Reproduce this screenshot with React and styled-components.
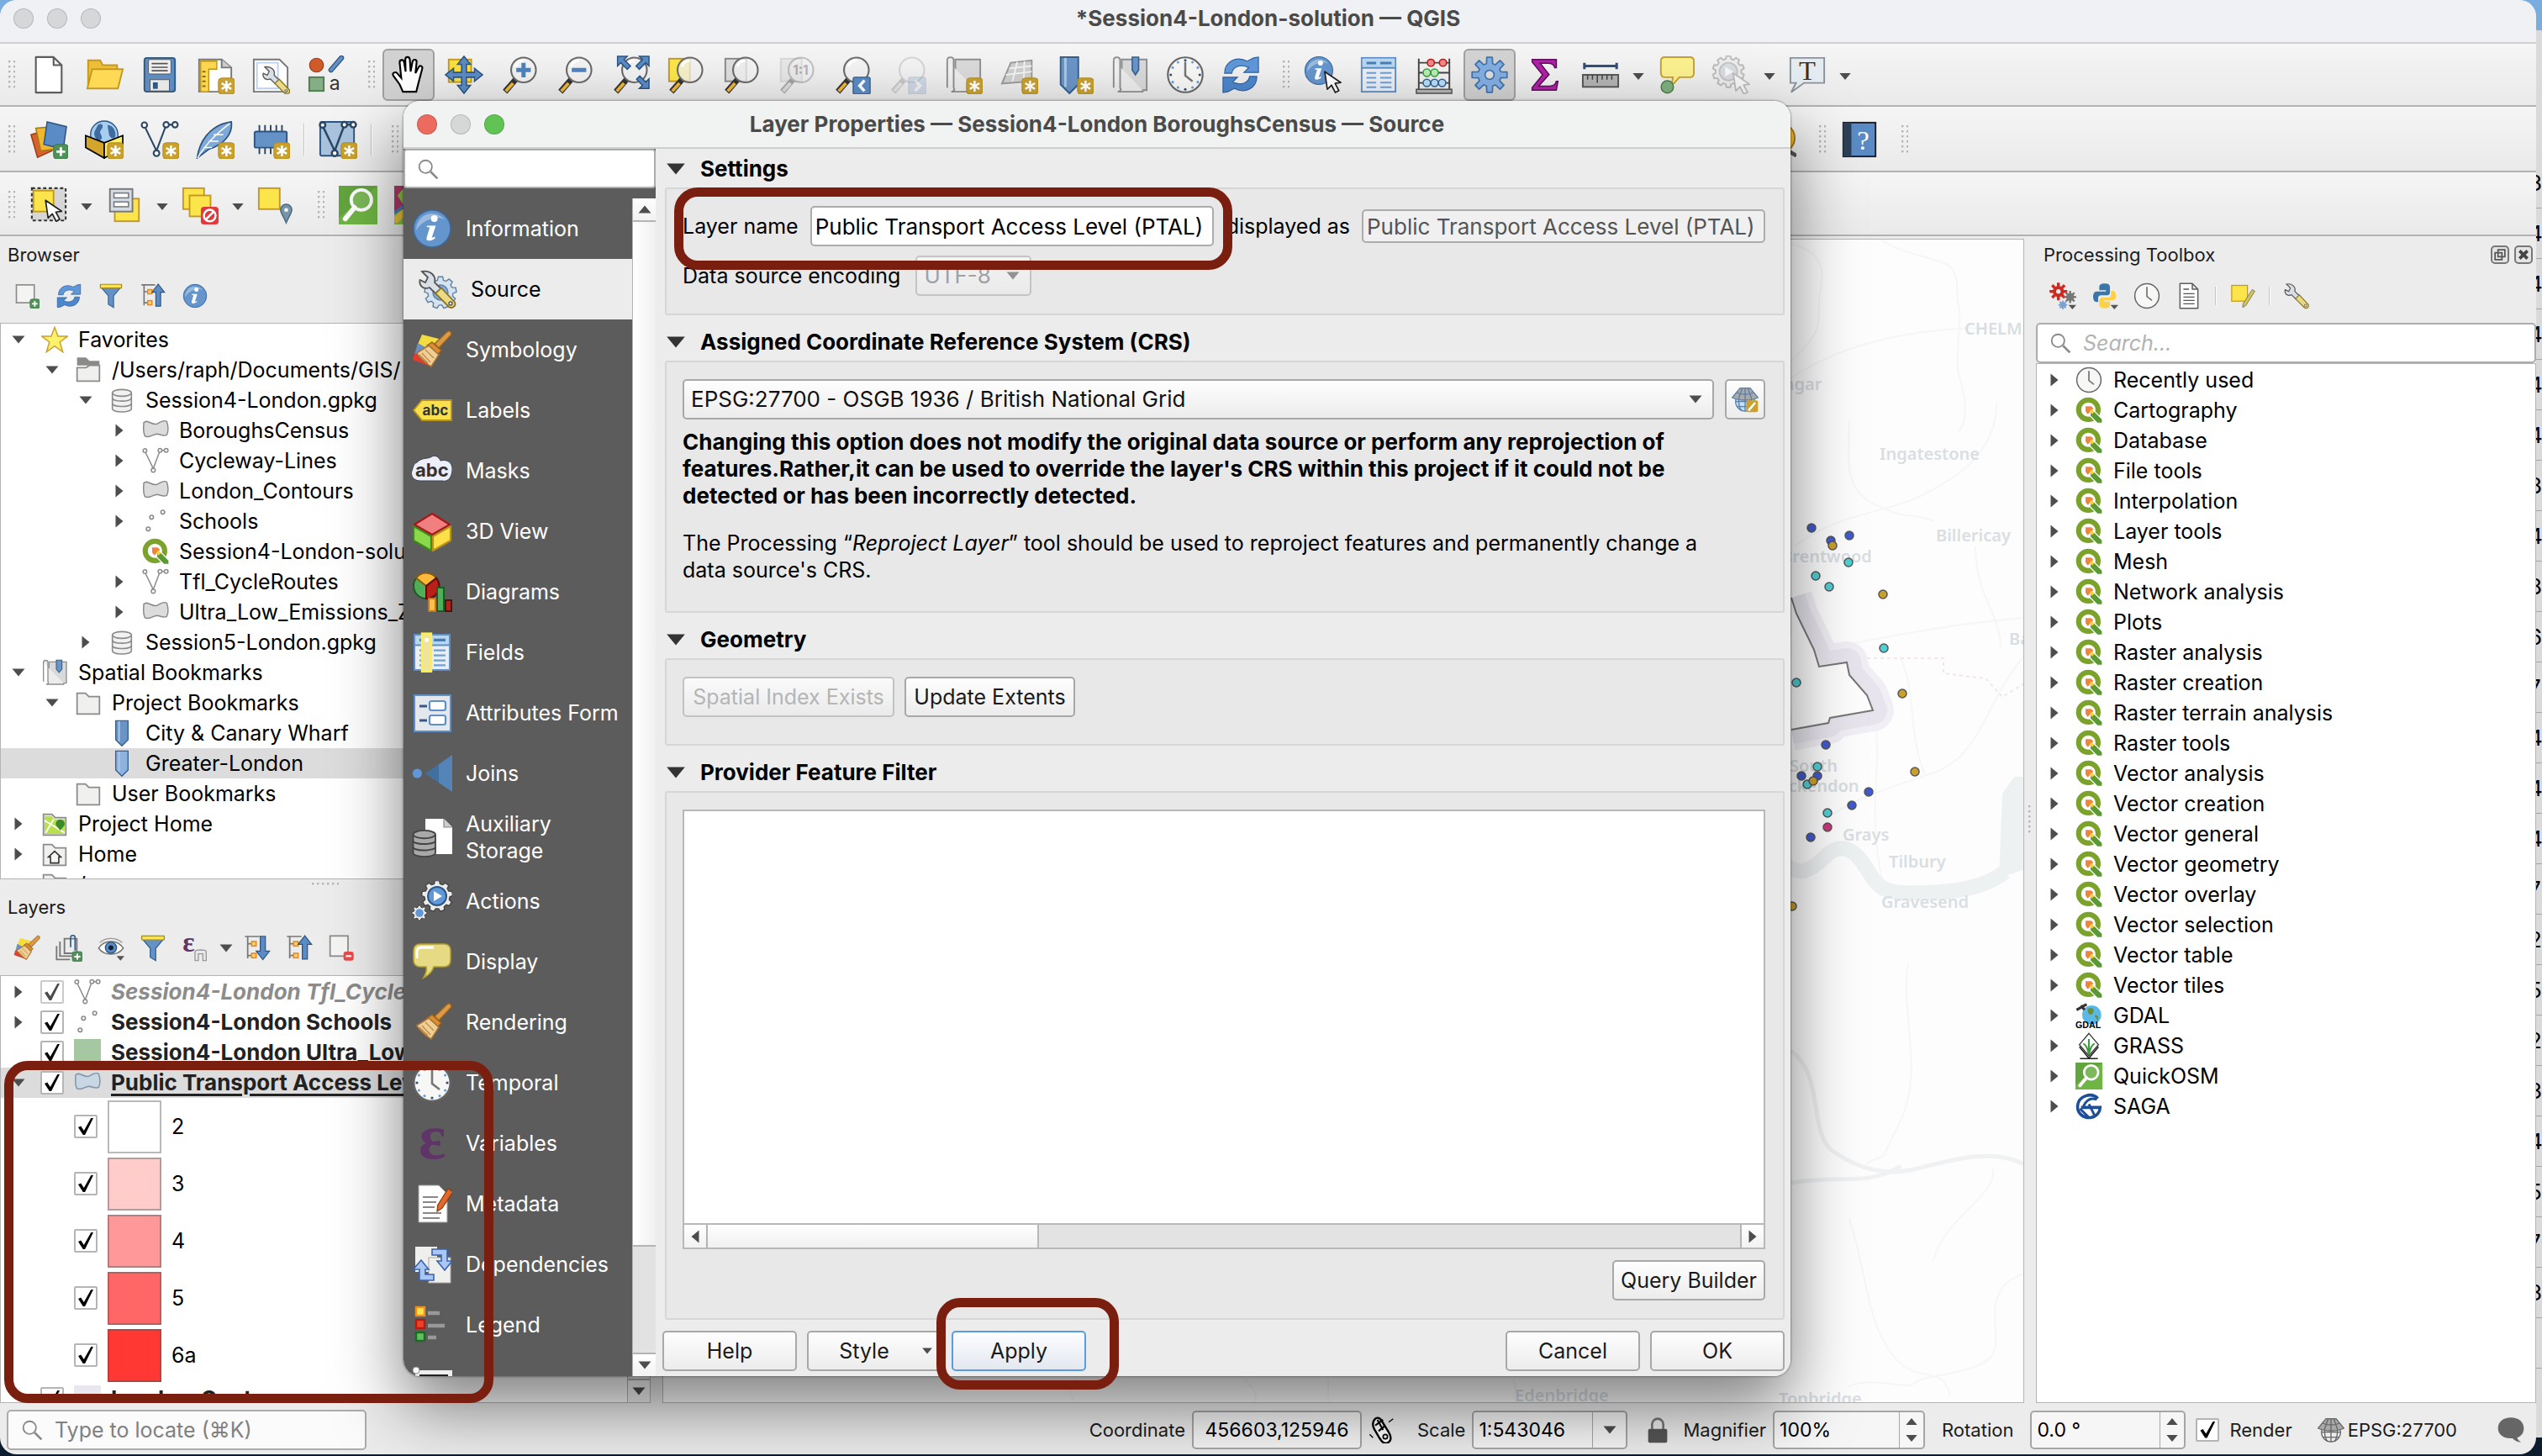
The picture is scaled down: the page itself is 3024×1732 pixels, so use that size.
import React from "react";
import styled, { createGlobalStyle } from "styled-components";

const GlobalStyle = createGlobalStyle`
  *, *::before, *::after { box-sizing: border-box; }
  html, body { margin: 0; height: 100%; overflow: hidden; }
  body, button, input, select, textarea {
    font-family: Inter, "Liberation Sans", sans-serif;
    font-size: 25px;
    line-height: 32px;
    color: #000;
  }
  button, input, select { margin: 0; }
  ul { list-style: none; margin: 0; padding: 0; }
`;

/* ---------- drawing helpers ---------- */

function gear(cx, cy, ro, ri, n) {
  const step = (Math.PI * 2) / n;
  const pts = [];
  for (let i = 0; i < n; i++) {
    const a = i * step - Math.PI / 2;
    [[ri, -0.34], [ro, -0.2], [ro, 0.2], [ri, 0.34]].forEach(([r, o]) => {
      pts.push(`${(cx + r * Math.cos(a + o * step)).toFixed(2)},${(cy + r * Math.sin(a + o * step)).toFixed(2)}`);
    });
  }
  return pts.join(" ");
}

const Star = ({ x = 14, y = 14 }) => (
  <g transform={`translate(${x} ${y})`}>
    <rect width="10" height="10" rx="2" fill="#c9a12c" stroke="#b08a1c" strokeWidth=".5" />
    <path d="M5 1.6v6.8M2 3.2l6 3.6M8 3.2L2 6.8" stroke="#fff" strokeWidth="1.3" />
  </g>
);
const Plus = ({ x = 15, y = 15 }) => (
  <g transform={`translate(${x} ${y})`}>
    <rect width="9" height="9" rx="1.8" fill="#4f9159" stroke="#3a7444" strokeWidth=".5" />
    <path d="M4.5 1.8v5.4M1.8 4.5h5.4" stroke="#fff" strokeWidth="1.5" />
  </g>
);
const Cursor = ({ x, y, fill = "#fff", stroke = "#222" }) => (
  <path transform={`translate(${x} ${y})`} d="M0 0l1.6 11 2.6-2.6L6.6 13l2.2-1.2-2.4-4.5 3.6-.5z" fill={fill} stroke={stroke} strokeWidth=".9" strokeLinejoin="round" />
);
const Lens = ({ children, faded, cx = 14.5 }) => (
  <g opacity={faded ? 0.35 : 1}>
    <path d="M9.5 15L3 22.5" stroke="#333" strokeWidth="3.6" />
    <path d="M8 17.2L3.500 22.2" stroke={faded ? "#bbb" : "#f0b72e"} strokeWidth="2" />
    <circle cx={cx} cy="9" r="7.7" fill="#f2f2f2" fillOpacity=".75" stroke="#6b6b6b" strokeWidth="1.1" />
    <path d="M9.500 7a5.500 5.500 0 0 1 5-3.800" stroke="#fff" strokeWidth="1.4" fill="none" />
    {children}
  </g>
);
const Info = () => (
  <g>
    <circle cx="12" cy="12" r="11" fill="#6495cd" stroke="#3c6a9f" strokeWidth=".8" />
    <path d="M2.500 13a9.600 9.600 0 0 1 17-6.500c-4-2-12-1-17 6.500z" fill="#fff" opacity=".35" />
    <circle cx="13.3" cy="6" r="2" fill="#fff" />
    <path d="M9 10.200h5.200l-2.400 7.300 1.800-.7.300.8c-1.600 1.500-5.500 2.600-5.200 0l1.900-6.300-1.700-.3z" fill="#fff" />
  </g>
);
const BlueArrows = () => (
  <g stroke="#2f619f" strokeWidth=".6">
    <path d="M2 11C2 4 9 0 16 3.500L20 1.500l3 -.5v9.500h-9l3-3C12 5 7 7 6.500 11z" fill="#5f97d8" />
    <path d="M22 13c0 7-7 11-14 7.500L4 22.500l-3 .5v-9.500h9l-3 3c5 2.500 10 .5 10.500-3.500z" fill="#4c86cb" />
  </g>
);
const VLine = ({ c = "#2b4763", w = 1.1 }) => (
  <g fill="none" stroke={c} strokeWidth={w}>
    <path d="M3 4.500l7 14.500 6-16M17.500 2.800h3" />
    <circle cx="2.5" cy="3" r="1.7" fill="#fff" /><circle cx="10" cy="20.5" r="1.8" fill="#fff" />
    <circle cx="16" cy="2.8" r="1.7" fill="#fff" /><circle cx="21.5" cy="2.8" r="1.7" fill="#fff" />
  </g>
);
const Wrench = () => (
  <g>
    <path d="M3 1.500L6.500 5 5 8 1.800 6.500C1 10 4 12.500 7.500 11l4 4 3.200-3L10.500 8C11.500 4 8 .5 3 1.500z" fill="#d9dfe6" stroke="#555" strokeWidth=".9" />
    <path d="M11 14.500l3.500-3.300 8 8.500c1 2-1 4-3.300 3z" fill="#ead985" stroke="#8a7526" strokeWidth=".9" />
    <circle cx="20" cy="20.5" r="1" fill="#fff" stroke="#555" strokeWidth=".7" />
  </g>
);
const Funnel = () => (
  <g strokeWidth=".9">
    <path d="M2 3h20L14.500 12v11l-5-3V12z" fill="#6592c6" stroke="#33608f" />
    <path d="M2 1h20v3.500H2z" fill="#fbe54a" stroke="#a48a1c" />
  </g>
);
const TreeArrow = ({ up }) => (
  <g>
    <path d="M1 1.500h13M3.500 2v19M3.500 8h4M3.500 18.500h4" stroke="#777" strokeWidth="1.3" fill="none" />
    <rect x="7" y="6" width="4" height="4" fill="#ffd27a" stroke="#e88a1a" strokeWidth="1.2" />
    <rect x="7" y="16.5" width="4" height="4" fill="#ffd27a" stroke="#e88a1a" strokeWidth="1.2" />
    <path transform={up ? "" : "matrix(1 0 0 -1 0 23)"} d="M17 .8l6 7.700h-3.700v13.200h-4.600V8.500H11z" fill="#5b8bc4" stroke="#2d5580" strokeWidth=".9" />
  </g>
);
const Brush = ({ plain }) => (
  <g>
    {!plain && <><path d="M6 3l12 3-8 8-7-4z" fill="#f4dc3f" /><path d="M3.500 8l9 5-3 5-8-3z" fill="#6a8fc8" /><path d="M1.500 14l10 4 0 4L.5 18z" fill="#e63a2d" /></>}
    <path d="M22.800 1.200c1 .8.8 1.700 0 2.600L16 11l-2.500-2.500 7-6.700c.800-.9 1.600-1.200 2.300-.6z" fill="#dc9a45" stroke="#9a5f1a" strokeWidth=".7" />
    <path d="M12 7.500l5.500 5-2.500 2.500-6-5.500z" fill="#d98c32" stroke="#9a5f1a" strokeWidth=".7" />
    <path d="M9 9.500l6 5.500-4.500 7C7 20 4 17 1.800 14z" transform="translate(1 0)" fill="#f0cf96" stroke="#a87331" strokeWidth=".8" />
    <path d="M6 14l5 5.500M8 12l5 5M4.500 15l5 5" stroke="#b98545" strokeWidth=".6" />
  </g>
);
const QLogo = () => (
  <g>
    <circle cx="11.5" cy="11.5" r="8.7" fill="#fff" stroke="#7ba32c" strokeWidth="4.6" />
    <path d="M13 13h4l7 7v3.500h-4.500l-6.500-6.500z" fill="#5a9a33" stroke="#fff" strokeWidth=".9" />
    <path d="M9 8.500h5l2 2-3 3-2 2L9 13z" fill="#f08438" />
    <path d="M12.500 13l2-2 2.500 2.500-2.500 2z" fill="#f4d43c" />
  </g>
);
const Clock = ({ dots }) => (
  <g>
    <circle cx="12" cy="12" r="10.8" fill="#f7f7f5" stroke="#666" strokeWidth="1.1" />
    {dots && Array.from({ length: 12 }, (_, i) => (
      <circle key={i} cx={12 + 9 * Math.sin(i * Math.PI / 6)} cy={12 - 9 * Math.cos(i * Math.PI / 6)} r=".8" fill={i % 3 ? "#6d9fd6" : "#2c4f73"} />
    ))}
    <path d="M12 4v8.500l4.500 3.500" fill="none" stroke="#777" strokeWidth="1.3" />
  </g>
);
const Page = () => <path d="M4 1h11l5 5v17H4z M15 1v5h5" fill="#fff" stroke="#5c5c5c" strokeWidth="1.1" strokeLinejoin="round" />;
const Db = ({ dark }) => (
  <g fill={dark ? "#a8a8a8" : "#f1f1f1"} stroke={dark ? "#444" : "#8a8a88"} strokeWidth="1.2">
    <path d="M3.500 5.500v14c0 4 17 4 17 0v-14" /><path d="M3.500 15c0 3.500 17 3.500 17 0M3.500 10.200c0 3.500 17 3.500 17 0" fill="none" />
    <ellipse cx="12" cy="5.5" rx="8.5" ry="3" />
  </g>
);
const Folder = ({ children }) => <g><path d="M2 3.500h7.500l3 3H22V22H2z" fill="#f0f0ee" stroke="#8a8a88" strokeWidth="1.3" />{children}</g>;
const Poly = ({ f = "#dcdcdc", s = "#8a8a88" }) => <path d="M1.500 5c3-3.500 7 2.500 11.500 1.300C16.500 5 18.500 2 22 4c1.500 4.500 1.500 9 0 12-3 1.500-5.500-.5-8.500-.8-4 0-7.500 4.300-11 1.800C.5 13 1.500 9 1.500 5z" fill={f} stroke={s} strokeWidth="1.1" />;
const Pts = () => <g fill="#fff" stroke="#8a8a88" strokeWidth="1.2"><circle cx="5.5" cy="19" r="1.7" /><circle cx="8.5" cy="8.5" r="1.7" /><circle cx="18.5" cy="4" r="1.7" /></g>;
const Pin = ({ f = "#6a94c6" }) => <g><path d="M6.500 1h11v17L12 23.500 6.500 18z" fill={f} stroke="#33608f" strokeWidth="1" /><path d="M9.500 1.500v18" stroke="#a9c7e8" strokeWidth="1.5" /></g>;
const Book = () => <g><path d="M7 2.500h15.500v19H7z" fill="#d9d9d9" stroke="#8e8e8e" /><path d="M2 3c0-2.500 4-2.500 4 0v17c1 1.200 0 2.500-1.500 2.500H20v-1" fill="#ececec" stroke="#8e8e8e" /><path d="M2 3v17" stroke="#8e8e8e" /></g>;
const Quick = () => (
  <g>
    <rect width="24" height="24" fill="#6fb544" /><path d="M0 0h24L0 20z" fill="#58983a" opacity=".55" />
    <circle cx="14" cy="8.8" r="6.3" fill="#7cb95a" stroke="#fff" strokeWidth="2" /><path d="M9.800 13.500L4 20.500" stroke="#fff" strokeWidth="3" strokeLinecap="round" />
  </g>
);
const Table = () => (
  <g>
    <rect x="1.5" y="1.5" width="21" height="21" fill="#e9eef4" stroke="#5f8fc6" strokeWidth="1" />
    <path d="M2 2h20v5.500H2z" fill="#b7d6f0" /><path d="M4.500 4.700h6M13 4.700h7" stroke="#4b7db5" strokeWidth="1.6" />
    <path d="M1.500 7.700h21" stroke="#5f8fc6" /><path d="M4.500 10.800h6M13 10.800h7M4.500 13.800h6M13 13.800h7M4.500 16.800h6M13 16.800h7M4.500 19.700h6M13 19.700h7" stroke="#6f9fd3" strokeWidth="1.1" />
  </g>
);
const Eps = ({ x = 6, y = 19, size = 24 }) => <text x={x} y={y} fontFamily="Liberation Serif, serif" fontWeight="bold" fontSize={size} fill="#5f3468">ε</text>;
const Globe = ({ c = "#666", f = "none" }) => (
  <g fill={f} stroke={c} strokeWidth="1"><circle cx="12" cy="14" r="8.5" /><path d="M3.500 14h17M5 18.500h14M12 6v16.500M8.500 7c-3 4-3 10 0 15M15.500 7c3 4 3 10 0 15" fill="none" /><path d="M7.500 2h9l7 8.500c-6 3-17 3-23 0z" fill="#a9a9a9" /><path d="M9.500 2L6 12M14.500 2L18 12M12 2v10.500M4.500 6c4 2 11 2 15 0" fill="none" /></g>
);
const BigArrowBox = ({ o = 1, d }) => <g opacity={o}><rect x="12.5" y="13.5" width="10.5" height="10.5" rx="1" fill="#5b8bc4" stroke="#33608f" strokeWidth=".7" /><path d={d} fill="none" stroke="#fff" strokeWidth="1.8" /></g>;

const ICONS = {
  newdoc: <Page />,
  open: <g stroke="#c39a1f" strokeWidth="1"><path d="M2 20V3h7.500l1.500 3h9v4" fill="#eebf36" /><path d="M4.500 8.500H23.500L20.500 20.500H1.500z" fill="#fdd955" /></g>,
  save: <g><rect x="2.5" y="1.5" width="19" height="21" rx="1.5" fill="#5d8cc3" stroke="#2f587f" /><rect x="5" y="2.5" width="14" height="9" rx="1" fill="#eee" stroke="#555" strokeWidth=".5" /><path d="M7 5h10M7 7.300h10M7 9.500h10" stroke="#555" strokeWidth=".9" /><rect x="6" y="15" width="12" height="7" fill="#e8e8e8" stroke="#555" strokeWidth=".5" /><rect x="7.8" y="16.7" width="3" height="4" fill="#2f587f" /></g>,
  layout: <g><path d="M2 2.500h14l6 5v15H2z" fill="#fff" stroke="#777" /><path d="M16 2.500v5h6" fill="#ccc" stroke="#777" /><path d="M3 3.500h10v5H8v14H3z" fill="#fbd64e" stroke="#b9921c" strokeWidth=".7" /><path d="M4 10h2M4 13h2M4 16h2M4 19h2" stroke="#8a6d14" /><Star /></g>,
  manager: <g><path d="M1.500 2.500h16l5 5v15h-21z" fill="#fff" stroke="#777" /><path d="M3.500 4.500h13v16h-13z" fill="none" stroke="#bcd0f0" /><g transform="translate(6 6) scale(.78)"><Wrench /></g></g>,
  style: <g><circle cx="6" cy="6" r="4.3" fill="#cf5b2b" stroke="#9c3c14" strokeWidth=".6" /><path d="M15 9l6.500-7.500" stroke="#2f587f" strokeWidth="3.2" strokeLinecap="round" /><path d="M15 9l6.500-7.500" stroke="#6592c6" strokeWidth="1.8" strokeLinecap="round" /><rect x="1.5" y="13.5" width="9" height="8.5" fill="#86ae86" stroke="#4d7c4d" /><text x="14" y="21.5" fontSize="12" fill="#333">a</text></g>,
  hand: <path d="M8.500 22.500L6.500 18 2.500 12.500c-1-1.800 1.500-2.800 2.700-1.200L7.500 14 6.500 4.500c-.200-2 2.300-2.300 2.700-.5L10.200 10 10 2.500c0-2 2.600-2 2.800 0L13.300 10l1.200-6.300c.5-1.700 2.700-1.300 2.500.5L16.300 11l2-3.800c.9-1.400 2.600-.5 2.200 1l-2.200 8.300-1.500 6z" fill="#fff" stroke="#000" strokeWidth="1.1" />,
  pan: <g><rect x="2.5" y="2.5" width="14" height="14" fill="#fbdf3e" stroke="#c39a1f" /><path d="M12 .5l4 5h-2.500v5h5V8L23.500 12l-5 4v-2.500h-5v5H16l-4 5-4-5h2.500v-5h-5V16l-5-4 5-4v2.500h5v-5H8z" fill="#5b8bc4" stroke="#2d5580" strokeWidth=".8" /></g>,
  zoomin: <Lens><path d="M14.500 4.500v9M10 9h9" stroke="#4f82bd" strokeWidth="2.6" /></Lens>,
  zoomout: <Lens><path d="M10 9h9" stroke="#4f82bd" strokeWidth="2.6" /></Lens>,
  zoomfull: <g><Lens /><path d="M4 .5h6L8 2.600 12 6.500 10 8.500 6 4.500 4 6.500zM23.500.5v6l-2-2-4 4-2-2 4-4-2-2zM23.500 20.500h-6l2-2-3.700-3.800 2-2 3.700 3.800 2-2z" fill="#5b8bc4" stroke="#2d5580" strokeWidth=".8" /></g>,
  zoomsel: <g><rect x="1.5" y="2" width="13" height="14" fill="#fbe54a" stroke="#c39a1f" /><Lens /></g>,
  zoomlayer: <g><rect x="2" y="2" width="13" height="14" fill="#ddd" stroke="#888" /><Lens /></g>,
  zoomnative: <g><rect x="2" y="2" width="13" height="14" fill="#ddd" stroke="#bbb" opacity=".5" /><Lens faded><text x="9.5" y="12" fontSize="8" fontWeight="bold" fill="#444">1:1</text></Lens></g>,
  zoomlast: <g><Lens /><BigArrowBox d="M19.500 15.500l-3 3.300 3 3.300" /></g>,
  zoomnext: <g opacity=".6"><Lens faded /><BigArrowBox o={0.35} d="M16.500 15.500l3 3.300-3 3.300" /></g>,
  newmap: <g><Book /><Star /></g>,
  new3d: <g><path d="M7 4.500l13-1.500v13L1.500 17.500z" fill="#cfcfcf" stroke="#999" /><path d="M4 12l16-2M6 8l14-1.500M11 4L8 16M15.500 3.500L15 16" stroke="#f2f2f2" fill="none" /><Star /></g>,
  newbm: <g><g transform="translate(-3 0)"><Pin /></g><Star /></g>,
  bms: <g><Book /><path d="M13.500 1h4v8l-2 3-2-3z" fill="#6a94c6" stroke="#33608f" strokeWidth=".8" /></g>,
  clockd: <Clock dots />,
  clock: <Clock />,
  refresh: <BlueArrows />,
  identify: <g><g transform="scale(.78)"><Info /></g><Cursor x="13" y="10" /></g>,
  table: <Table />,
  abacus: <g><path d="M2.500 2v19M21.500 2v19M2.500 4.500h19M2.500 10.700h19M2.500 17h19" stroke="#444" fill="none" /><g strokeWidth=".8"><g fill="#f08a8a" stroke="#b01e1e"><circle cx="10" cy="4.5" r="2.2" /><circle cx="17.5" cy="4.5" r="2.2" /></g><g fill="#b6ecb6" stroke="#3c9a3c"><circle cx="7.5" cy="10.7" r="2.3" /><circle cx="12.3" cy="10.7" r="2.3" /></g><g fill="#b7dcf6" stroke="#33608f"><circle cx="7.5" cy="17" r="2.3" /><circle cx="12.3" cy="17" r="2.3" /><circle cx="17" cy="17" r="2.3" /></g></g><rect x="1" y="21" width="22" height="2.5" fill="#b5b5b5" stroke="#555" strokeWidth=".8" /></g>,
  gear: <g><polygon points={gear(12, 12, 11, 7.2, 8)} fill="#84aee0" stroke="#3f73b0" strokeWidth=".9" strokeLinejoin="round" /><circle cx="12" cy="12" r="2.8" fill="#ddd" stroke="#3f73b0" strokeWidth=".9" /></g>,
  sigma: <path d="M4 2.500h15v5h-1c-.5-2-1.500-2.700-4-2.700H9l5.500 7L8 19h7c2.500 0 3.500-1 4-3h1l-1 5.500H4v-1.500L10.500 12 4 4z" fill="#b021a8" stroke="#5c1158" strokeWidth=".8" />,
  ruler: <g><path d="M2 6.500h20M2 4.500v4M22 4.500v4" stroke="#2f4f78" strokeWidth="1.6" /><rect x="1" y="12" width="22" height="7.5" fill="#b3b3b3" stroke="#555" /><path d="M4 12v3M7 12v3M10 12v5M13 12v3M16 12v3M19 12v3" stroke="#444" strokeWidth=".8" /></g>,
  tips: <g><path d="M5 1h15.500c1.600 0 2.500 1 2.500 2.600v7.200c0 1.700-1 2.700-2.500 2.700H14l-5 5.500 1-5.500H5c-1.500 0-2.500-1-2.500-2.700V3.600C2.500 2 3.500 1 5 1z" fill="#fbf08f" stroke="#c5a02a" /><circle cx="6.5" cy="19.5" r="3.8" fill="#7fb07f" stroke="#4d7c4d" strokeWidth=".8" /></g>,
  action: <g opacity=".5"><polygon points={gear(10, 10, 9.8, 8, 10)} fill="#e8e8e8" stroke="#888" /><circle cx="10" cy="10" r="5.5" fill="#c2c8d0" stroke="#999" /><path d="M8 7l5 3-5 3z" fill="#fff" /><Cursor x="13" y="11" stroke="#888" /></g>,
  text: <g><path d="M1.500 1.500h21v15.500H10l-8 5.800L5 17H1.500z" fill="#e4ecf2" stroke="#8a939b" /><text x="6.8" y="15" fontFamily="Liberation Serif, serif" fontSize="17" fill="#333">T</text></g>,
  datasource: <g strokeWidth=".8"><path d="M1 9l10-3 3 13-9 4z" fill="#d8622d" stroke="#9c3c14" /><path d="M4 5l11-1 1 14-9 1z" fill="#f0b72e" stroke="#a27a14" /><path d="M11 1l12 3-2 14-12-3z" fill="#5b8bc4" stroke="#2d5580" /><Plus /></g>,
  geopkg: <g><circle cx="12" cy="9" r="8.5" fill="#a8cdf2" stroke="#2d5580" strokeWidth=".7" /><path d="M8 3c3-2 4 1 2 3s2 4 0 6-5-2-4-5zM14 3c3 0 5 3 5 6s-3 3-4 0z" fill="#3e6c9f" /><path d="M.5 9.500L12 14v9.500L.5 17z" fill="#d3a52c" stroke="#000" strokeWidth=".9" /><path d="M23.500 9.500L12 14v9.500L23.500 17z" fill="#fdf16a" stroke="#000" strokeWidth=".9" /><Star /></g>,
  shp: <g><VLine /><Star /></g>,
  spatialite: <g><path d="M.8 23.500C2 14 8 3 22 1c1 7-4 14-14 17z" fill="#7fa9d8" stroke="#2d5580" strokeWidth=".9" /><path d="M1 23.500C6 15 13 8 21 2M8 13l6 0M11 9h6M5 17h5" stroke="#fff" strokeWidth=".8" fill="none" /><Star /></g>,
  memory: <g><path d="M5 3v18M8.500 3v18M12 3v18M15.500 3v18M19 3v18" stroke="#2b4763" strokeWidth="1" /><rect x="2" y="7" width="20" height="10" rx="1" fill="#6592c6" stroke="#2d5580" /><Star /></g>,
  virtual: <g><rect x="1" y="1" width="21" height="21" rx="1" fill="#a9c3de" stroke="#2d5580" /><VLine w={1.3} /><Star /></g>,
  help: <g><rect x="2" y="1.5" width="20" height="21" fill="#5b8bc4" stroke="#1d1d2b" strokeWidth="1" /><rect x="2" y="1.5" width="5" height="21" fill="#2b3f55" /><text x="10.5" y="18" fontSize="17" fill="#fff" fontFamily="Liberation Serif, serif">?</text></g>,
  meta: <g><circle cx="14" cy="11" r="9" fill="#f0b72e" stroke="#a27a14" /><path d="M19 19l5 3" stroke="#555" strokeWidth="2.4" /></g>,
  select: <g><rect x="1.5" y="1.5" width="21" height="20" fill="#d6d6d6" stroke="#333" strokeDasharray="2 1.5" strokeWidth="1.1" /><rect x="2.5" y="3" width="12.5" height="13" fill="#fbe54a" stroke="#c39a1f" /><Cursor x="10" y="9" /></g>,
  selform: <g><rect x="6" y="8" width="15" height="14" fill="#fbe54a" stroke="#c39a1f" /><rect x="3" y="2" width="14" height="14" fill="#d3dbe4" stroke="#777" /><rect x="5.5" y="4.5" width="9" height="3" fill="#fff" stroke="#777" strokeWidth=".8" /><rect x="5.5" y="10" width="9" height="3" fill="#fff" stroke="#777" strokeWidth=".8" /></g>,
  deselect: <g><rect x="1.5" y="1.5" width="13" height="13" fill="#fbe54a" stroke="#c39a1f" /><rect x="5.5" y="6" width="13" height="13" fill="#fbe54a" stroke="#c39a1f" /><rect x="12.5" y="13" width="11" height="11" rx="2" fill="#e1393c" /><circle cx="18" cy="18.5" r="3.6" fill="none" stroke="#fff" strokeWidth="1.3" /><path d="M15.500 21l5-5" stroke="#fff" strokeWidth="1.3" /></g>,
  selloc: <g><rect x="1.5" y="1.5" width="13" height="13" fill="#fbe54a" stroke="#c39a1f" /><path d="M18.500 23c-2-5-3.500-6-3.500-8a3.500 3.500 0 0 1 7 0c0 2-1.500 3-3.500 8z" fill="#7895a8" stroke="#4a6a80" strokeWidth=".8" /><circle cx="18.5" cy="15" r="1.2" fill="#fff" /></g>,
  quick: <Quick />,
  osm: <g><rect width="24" height="24" fill="#8bc34a" /><path d="M0 0h7l-5 6 5 8-7 3z" fill="#b03a68" /><path d="M0 22l9-8 8 10" stroke="#e9c33b" strokeWidth="4" fill="none" /><path d="M0 17l8-6 16 12" stroke="#4b79b8" strokeWidth="2" fill="none" /></g>,
  addlayer: <g><rect x="2" y="1.5" width="17" height="17" fill="#f4f4f2" stroke="#8a8a88" strokeWidth="1.3" /><Plus /></g>,
  filter: <Funnel />,
  collapse: <TreeArrow up />,
  expand: <TreeArrow />,
  info: <Info />,
  star: <path d="M12 1l3 8h8.500l-6.800 5.200L19.300 23 12 17.800 4.700 23l2.600-8.800L.5 9H9z" fill="#fdf06a" stroke="#c9a12c" strokeWidth="1.1" />,
  dir: <g><path d="M2 1h8l3 3h9v4H2z" fill="#8a8a88" /><path d="M2 10h8l3-2h9v14H2z" fill="#f0f0ee" stroke="#8a8a88" strokeWidth="1.3" /></g>,
  folder: <Folder />,
  home: <Folder><path d="M12 9.500l-5.500 5h1.800V20h7.400v-5.500h1.800z" fill="#f6f6f4" stroke="#333" strokeWidth="1.2" /></Folder>,
  projhome: <g><Folder /><path d="M3 5h6l3 3h9v13H3z" fill="#b8e04a" /><path d="M3 9l18 11M11 8L4 20" stroke="#fff" strokeWidth="1.4" /><path d="M17 18c-2-3-4-4-4-6a4 4 0 0 1 8 0c0 2-2 3-4 6z" fill="#3a8a2a" /></g>,
  db: <Db />,
  poly: <Poly />,
  polyblue: <Poly f="#c9d6e4" s="#7e94aa" />,
  line: <VLine c="#8a8a88" />,
  pts: <Pts />,
  q: <QLogo />,
  pin: <Pin />,
  pinlight: <Pin f="#8db2de" />,
  book: <g><Book /><path d="M13.500 1h5v8l-2.500 3-2.500-3z" fill="#6a94c6" stroke="#33608f" strokeWidth=".8" /></g>,
  green: <rect width="24" height="24" fill="#a5c8a2" />,
  lilac: <rect width="24" height="24" fill="#e9e6f0" />,
  brush: <Brush />,
  broom: <Brush plain />,
  addgroup: <g><path d="M1 10v12h12M4 6v13h11M8 3.500h11v13H8z" fill="none" stroke="#777" strokeWidth="1.4" /><path d="M13.500 11V2.500a2 2 0 0 1 4 0V14" fill="none" stroke="#33608f" strokeWidth="1.3" /><Plus /></g>,
  eye: <g><path d="M1 12c5-8 17-8 22 0-5 7-17 7-22 0z" fill="#fff" stroke="#777" strokeWidth="1.1" /><path d="M2 7c5-5 15-5 20 0" fill="none" stroke="#999" /><circle cx="12" cy="11.5" r="5" fill="#5b8bc4" stroke="#2d5580" /><circle cx="12" cy="11.5" r="2.2" fill="#123" /><path d="M17 19h7l-3.500 4z" fill="#555" /></g>,
  eps: <g><Eps x={1} y={15} size={25} /><path d="M12 23v-8c0-2 10-2 10 0v8h-3v-6h-4v6z" fill="#e8e8e8" stroke="#999" /></g>,
  remove: <g><rect x="2" y="1" width="16" height="18" fill="#f4f4f2" stroke="#8a8a88" strokeWidth="1.3" /><rect x="14" y="15" width="9" height="8" rx="2" fill="#ea4a4a" /><path d="M16 19h5" stroke="#fff" strokeWidth="1.6" /></g>,
  gears: <g><polygon points={gear(8, 8, 8, 5, 8)} fill="#cf2a1f" /><circle cx="8" cy="8" r="2" fill="#ececec" /><polygon points={gear(18.5, 13, 5.5, 3.5, 8)} fill="#777" /><polygon points={gear(12, 20, 4, 2.8, 8)} fill="#7ba0d4" /><path d="M17 20h7l-3.500 4z" fill="#555" /></g>,
  python: <g><path d="M12 1c-4 0-5 1.500-5 3.500V7h6v1H4.500C2 8 1.500 11 1.500 13s1 4.500 3 4.500H6V14c0-1.500 1-2.500 2.500-2.500H14c1.500 0 2.500-1 2.500-2.500V4.500C16.500 2 15 1 12 1z" fill="#3b76a9" /><path d="M12 23c4 0 4.500-1.500 4.500-3.500V17H11v-1h8c2 0 3-2 3-4s-1-4.500-3-4.500h-1.500V11c0 1.500-1 2.500-2.500 2.500H9.500C8 13.500 7 14.500 7 16v3.500C7 22 9 23 12 23z" fill="#fdd147" /><path d="M17 20h7l-3.500 4z" fill="#555" /></g>,
  results: <g><Page /><path d="M7 6h5M7 10h10M7 13h10M7 16h10M7 19h10" stroke="#555" /></g>,
  editin: <g><rect x="1.5" y="2" width="15" height="15" fill="#fbe54a" stroke="#c39a1f" /><path d="M21 6l2.500 1.500L15 21l-3 2 .3-3.500z" fill="#d9c74a" stroke="#777" strokeWidth=".8" /></g>,
  wrench: <Wrench />,
  gdal: <g><circle cx="14.5" cy="11.5" r="8.5" fill="#5ab8e6" /><path d="M11 6c4-2 6 0 5 3s-4 3-5 0zM17 12c3-1 4 2 3 5z" fill="#6b8e3a" /><path d="M1 7l9-5M5 3l3 4" stroke="#333" strokeWidth="2.4" /><text x="0" y="23" fontSize="8" fontWeight="bold" fontFamily="Liberation Sans, sans-serif" fill="#000">GDAL</text></g>,
  grass: <g><path d="M12 1l8.500 10L12 21 3.500 11z" fill="#fff" stroke="#333" /><path d="M12 20c-1-6-3-9-5-10M12 20V6M12 20c1-6 3-9 5-10" stroke="#3d9a3d" strokeWidth="1.6" fill="none" /><path d="M3.500 13L12 23l8.500-10M4 23.500h16" stroke="#222" fill="none" strokeWidth="1.2" /></g>,
  saga: <g fill="none" stroke="#1d4f97" strokeWidth="2.7"><path d="M20 5C14-1 3 3 2 11s6 12 12 11c5-1 8-5 8-9H5" /><path d="M19 6c-5-2-9 0-12 6M12 10l5 10M4 14l8 8" strokeWidth="2.2" /></g>,
  crs: <g><Globe c="#5b7fa8" f="#bfe0fa" /><rect x="13" y="13" width="10.5" height="10.5" rx="1.5" fill="#c9a12c" /><path d="M15 22l6-7" stroke="#fff" strokeWidth="2" /></g>,
  globe: <Globe />,
  labels: <g><path d="M1 12l5-6h17.500v12H6z" fill="#f7e04c" stroke="#b9921c" strokeWidth=".9" /><text x="6.3" y="15" fontSize="8.5" fontWeight="bold" fill="#333">abc</text></g>,
  masks: <g><path d="M3 7c3-3 6-2 8-3 3-2 5 0 6 2 4-1 7 1 7 5s-2 8-6 7H5c-4 0-6-3-5-6s1-4 3-5z" fill="#eceffa" stroke="#3b3f52" strokeWidth=".5" /><text x="2" y="15.5" fontSize="11" fontWeight="bold" fill="#333">abc</text></g>,
  cube: <g strokeWidth="1.1" strokeLinejoin="round"><path d="M12 1.500L22.500 8 12 14 1.500 8z" fill="#f08080" stroke="#a81717" /><path d="M1 9l10.500 6v8.500L1 17.500z" fill="#8bd94a" stroke="#3d8a1a" /><path d="M23 9l-10.500 6v8.500L23 17.500z" fill="#fbe04a" stroke="#b9921c" /></g>,
  diagrams: <g strokeWidth="1"><circle cx="8.5" cy="8.5" r="7.5" fill="#4fae57" stroke="#1d5a24" /><path d="M8.500 8.500L2.500 3.800a7.500 7.500 0 0 1 12 0z" fill="#fbb93c" stroke="#8a5a0a" /><path d="M8.500 8.500l6-4.700a7.500 7.500 0 0 1-6 12.200z" fill="#b82018" stroke="#5e0d08" /><rect x="10" y="16" width="4" height="7.5" fill="#fbc04a" stroke="#c67a12" /><rect x="15" y="9.5" width="4" height="14" fill="#4fae57" stroke="#1d5a24" /><rect x="20" y="17" width="3.5" height="6.5" fill="#b82018" stroke="#5e0d08" /></g>,
  fields: <g><Table /><rect x="6" y=".8" width="5.5" height="22.7" fill="#efe3a2" stroke="#fff04a" strokeWidth="1.2" /><rect x="7.7" y="3.5" width="2.2" height="2.2" fill="#fff" /></g>,
  form: <g><rect x="1.5" y="1.5" width="21.5" height="21.5" fill="#e3e8ee" stroke="#5f8fc6" /><path d="M4.500 8H9M4.500 16.500H9" stroke="#3a5a85" strokeWidth="1.6" /><rect x="10.5" y="5" width="9.5" height="5.5" rx="1.2" fill="#fff" stroke="#5f8fc6" strokeWidth="1.1" /><rect x="10.5" y="13.5" width="9.5" height="5.5" rx="1.2" fill="#fff" stroke="#5f8fc6" strokeWidth="1.1" /></g>,
  joins: <g><path d="M24 1v22L8 12z" fill="#5584b8" /><path d="M16 6.500v11L8 12z" fill="#33608f" opacity=".6" /><circle cx="3.2" cy="12" r="2.8" fill="#5f97d8" /></g>,
  aux: <g><path d="M8 1h11l5 5v16H8z" fill="#fff" /><path d="M19 1v5h5" fill="#ccc" stroke="#888" strokeWidth=".6" /><g transform="translate(-2 6) scale(.78)"><Db dark /></g></g>,
  actions: <g><polygon points={gear(15, 9, 9.3, 7.5, 9)} fill="#ececec" stroke="#444" strokeWidth=".7" /><circle cx="15" cy="9" r="5.5" fill="#5f97d8" stroke="#2d5580" /><path d="M13 6l5 3-5 3z" fill="#fff" /><polygon points={gear(4.5, 19, 4.5, 3.5, 8)} fill="#ececec" stroke="#444" strokeWidth=".5" /><circle cx="4.5" cy="19" r="2.4" fill="#5f97d8" /></g>,
  display: <g><path d="M5 1.500h14c2.500 0 4 1.500 4 4V11c0 2.500-1.500 4-4 4h-6c-1 3-3 5-6 6.500 1.500-2.500 2-4.500 1.500-6.500H5c-2.500 0-4-1.500-4-4V5.500c0-2.500 1.500-4 4-4z" fill="#e6da85" stroke="#b5a02c" strokeWidth=".8" /><path d="M3 10V6c0-1.700 1-2.500 3-2.500h7" fill="none" stroke="#fff" strokeWidth="1.4" /></g>,
  variables: <g><Eps x={4} y={21} size={38} /></g>,
  metadata: <g><path d="M4 1h12l5 5v17H4z" fill="#fff" stroke="#999" strokeWidth=".5" /><path d="M6.500 8h9M6.500 11h8M6.500 14h7M6.500 17.500h11M6.500 20.500h10" stroke="#888" strokeWidth=".9" /><path d="M21.500 3l3 1.800L18 14.500l-3 2 .3-3.700z" fill="#e0692c" stroke="#8a3a10" strokeWidth=".6" /></g>,
  deps: <g><rect x="2" y="1.5" width="13" height="15" fill="#efefed" /><rect x="10" y="8" width="13" height="15" fill="#efefed" stroke="#aaa" strokeWidth=".5" /><path d="M12 3h9v7h3l-4.500 5.500L15 10h2.500V6.500H12z" fill="#a9c6f5" stroke="#3a63b0" strokeWidth=".8" /><path d="M13 21.500H4.500V15H.8L5.500 9.500 10 15H8v3h5z" fill="#a9c6f5" stroke="#3a63b0" strokeWidth=".8" /></g>,
  legend: <g strokeWidth="1.2"><rect x="2.5" y="1.5" width="5" height="5" fill="#fde04a" stroke="#f09020" /><rect x="2.5" y="9" width="5" height="5" fill="#f0402a" stroke="#b01e10" /><rect x="2.5" y="16.5" width="5" height="5" fill="#5fc05f" stroke="#1d6a24" /><path d="M9.500 5h7M9.500 12.500h10M9.500 19.500h5" stroke="#999" strokeWidth="2.2" /></g>,
  server: <g><path d="M2 3h22v20H2z" fill="#eee" /><path d="M5 6h16v16H5z" fill="#5b8bc4" stroke="#222" /><circle cx="2.5" cy="3" r="2" fill="#fff" stroke="#888" strokeWidth=".5" /></g>,
  search: <g fill="none" stroke="#8a8a8a" strokeWidth="1.7"><circle cx="9.5" cy="9.5" r="7" /><path d="M15 15l7.500 7.500" strokeWidth="2.4" /></g>,
  mouse: <g><path d="M6 2c3-2 5 0 7 4l5 8c3 5 2 8-1 9.500-4 1-5-1-7-4L5 11C3 7 4 4 6 2z" fill="#fff" stroke="#000" strokeWidth="1.8" /><path d="M6 8l7-5M9 13l6-5M8 3l5 9" stroke="#000" strokeWidth="1.6" /><circle cx="15" cy="18" r="2" fill="none" stroke="#000" strokeWidth="1.3" /><path d="M18 5l4-3M1 16l3 3" stroke="#000" /></g>,
  lock: <g><path d="M7 12V7a5 5 0 0 1 10 0v5" fill="none" stroke="#777" strokeWidth="2" /><rect x="3.500" y="11" width="17" height="12.5" rx="1.5" fill="#555" /></g>,
  bubble: <path d="M12 1c7 0 11.500 4 11.500 9.500 0 4-2 7-6 8.500 1 2 2 3 3.500 4-3 0-6-1.500-7.500-3.500C6 20 .5 16.500.5 10.500.5 5 5 1 12 1z" fill="#666" />,
};
ICONS.source = (
  <g>
    <polygon points={gear(14, 14, 9.5, 7.5, 9)} fill="#d5e2f0" stroke="#5f7f9f" strokeWidth=".7" />
    <circle cx="14" cy="14" r="4.5" fill="#7faee0" stroke="#5f7f9f" strokeWidth=".7" />
    <Wrench />
  </g>
);

const Svg = styled.svg`
  display: block;
  flex: none;
  width: ${(p) => p.$size}px;
  height: ${(p) => p.$size}px;
`;
const Icon = ({ name, size = 32 }) => <Svg viewBox="0 0 24 24" $size={size} aria-hidden="true">{ICONS[name]}</Svg>;

const TRI = { right: "3,1 9,6 3,11", down: "1,3 11,3 6,9", up: "1,9 11,9 6,3", left: "9,1 3,6 9,11" };
const Tri = ({ dir, size = 18, color = "#4d4d4d" }) => (
  <Svg viewBox="0 0 12 12" $size={size} aria-hidden="true"><polygon points={TRI[dir]} fill={color} /></Svg>
);

/* ---------- desktop and window ---------- */

const Desktop = styled.div`
  position: relative;
  height: 100vh;
  overflow: hidden;
  display: flex;
  background: linear-gradient(#79addf 0 36px, #dadada 36px 1710px, #0b1d2f 1710px);
`;
const Window = styled.div`
  flex: 1;
  min-width: 0;
  height: calc(100vh - 2px);
  display: flex;
  flex-direction: column;
  overflow: hidden;
  border-radius: 20px;
  background: #ececec;
`;
const Backdrop = styled.div`
  width: 7px;
  overflow: hidden;
  padding-top: 188px;
  div { height: 60px; line-height: 60px; border-bottom: 1px solid #a5a5a5; font-size: 26px; margin-left: -9px; }
`;
const TitleBar = styled.header`
  display: flex;
  align-items: center;
  flex: none;
  height: ${(p) => p.$h}px;
  padding: 0 16px ${(p) => p.$pb}px;
  border-bottom: 2px solid #cfcfcf;
  background: ${(p) => p.$bg};
  h1 { flex: 1; margin: 0 104px 0 0; text-align: center; font-size: 26px; line-height: 32px; font-weight: 700; color: #4a4a4a; }
`;
const Lights = styled.div`
  display: flex;
  gap: 16px;
  width: 104px;
`;
const Light = styled.button`
  width: 24px;
  height: 24px;
  padding: 0;
  border-radius: 50%;
  border: 1px solid rgba(0, 0, 0, 0.15);
  background: ${(p) => p.$c};
`;

const Toolbar = styled.div`
  display: flex;
  align-items: center;
  flex: none;
  gap: 19px;
  height: ${(p) => p.$h}px;
  padding: ${(p) => p.$pt || 0}px 0 0 10px;
  border-bottom: 2px solid #b2b2b2;
  background: linear-gradient(#f5f5f5, #eaeaea);
`;
const Group = styled.div`
  display: flex;
  align-items: center;
  gap: 4px;
`;
const Handle = styled.div`
  width: 8px;
  height: 34px;
  margin-right: 5px;
  background: radial-gradient(circle at 1px 1px, #b5b5b5 1px, transparent 2px) 0 0 / 6px 6px;
`;
const ToolButton = styled.button`
  display: flex;
  align-items: center;
  justify-content: center;
  flex: none;
  width: 62px;
  height: 62px;
  padding: 0;
  border: 2px solid ${(p) => (p.$on ? "#a0a0a0" : "transparent")};
  border-radius: 6px;
  background: ${(p) => (p.$on ? "#d2d2d2" : "none")};
`;
const MenuArrow = styled.button`
  display: flex;
  justify-content: center;
  width: 20px;
  padding: 4px 0 0;
  border: 0;
  background: none;
`;
const Sep = styled.span`
  width: 2px;
  height: ${(p) => p.$h}px;
  margin: 0 ${(p) => p.$m}px;
  background: #fff;
  border-left: 1px solid #c4c4c4;
`;
const UnderDialog = styled.span`
  width: ${(p) => p.$w}px;
`;

function Tools({ items, on = [] }) {
  return (
    <Group>
      <Handle />
      {items.map((n, i) =>
        n === "v" ? <MenuArrow key={i} aria-label="More"><Tri dir="down" size={16} /></MenuArrow>
          : n === "|" ? <Sep key={i} $h={38} $m={4} />
            : <ToolButton key={i} aria-label={n} $on={on.includes(n)}><Icon name={n} size={46} /></ToolButton>
      )}
    </Group>
  );
}

/* ---------- docks ---------- */

const Body = styled.div`
  flex: 1;
  min-height: 0;
  display: grid;
  grid-template-columns: 774px 14px minmax(0, 1fr) 14px 595px;
`;
const LeftColumn = styled.div`
  display: flex;
  flex-direction: column;
  min-height: 0;
`;
const Dock = styled.section`
  flex: ${(p) => p.$grow} 1 0;
  min-height: 0;
  display: flex;
  flex-direction: column;
`;
const DockTitle = styled.div`
  display: flex;
  align-items: center;
  justify-content: space-between;
  flex: none;
  height: 44px;
  padding: 0 4px 0 9px;
  h2 { margin: 0; font-size: 22px; line-height: 30px; font-weight: 400; color: #1c1c1c; }
`;
const DockButtons = styled.div`
  display: flex;
  gap: 6px;
`;
const DockButton = styled.button`
  display: flex;
  align-items: center;
  justify-content: center;
  width: 22px;
  height: 22px;
  padding: 0;
  border: 2px solid #777;
  border-radius: 5px;
  background: #e4e4e4;
`;
const DockTools = styled.div`
  display: flex;
  align-items: center;
  flex: none;
  height: 54px;
  margin-bottom: 5px;
  padding-left: 7px;
`;
const SmallTool = styled.button`
  display: flex;
  align-items: center;
  justify-content: center;
  width: ${(p) => p.$w || 50}px;
  height: 42px;
  padding: 0;
  border: 0;
  background: none;
`;
const Splitter = styled.div`
  display: flex;
  align-items: center;
  justify-content: center;
  height: ${(p) => (p.$v ? "auto" : "11px")};
  &::after {
    content: "";
    width: ${(p) => (p.$v ? "4px" : "32px")};
    height: ${(p) => (p.$v ? "34px" : "4px")};
    background: radial-gradient(circle at 1px 1px, #b5b5b5 1px, transparent 2px) 0 0 / 6px 6px;
  }
`;
const TreeBox = styled.div`
  flex: 1;
  min-height: 0;
  display: flex;
  overflow: hidden;
  border: 1px solid #b4b4b4;
  background: #fff;
`;
const Tree = styled.ul`
  flex: 1;
  min-width: 0;
  padding-top: 1px;
`;
const Row = styled.li`
  display: flex;
  align-items: center;
  height: 36px;
  padding-left: ${(p) => 10 + p.$level * 40}px;
  white-space: nowrap;
  background: ${(p) => (p.$on ? "#dcdcdc" : "none")};
`;
const ClassRow = styled.li`
  display: flex;
  align-items: center;
  height: 68px;
  padding-left: 87px;
`;
const Toggle = styled.button`
  display: flex;
  flex: none;
  align-items: center;
  justify-content: center;
  width: 22px;
  height: 22px;
  margin-right: ${(p) => p.$gap}px;
  padding: 0;
  border: 0;
  background: none;
`;
const RowText = styled.span`
  margin-left: ${(p) => p.$gap}px;
  font-size: ${(p) => (p.$bold ? 26 : 25)}px;
  font-weight: ${(p) => (p.$bold ? 700 : 400)};
  font-style: ${(p) => (p.$off ? "italic" : "normal")};
  color: ${(p) => (p.$off ? "#8c8c8c" : p.$bold ? "#222" : "#000")};
  text-decoration: ${(p) => (p.$u ? "underline" : "none")};
  text-decoration-thickness: 3px;
  text-underline-offset: 4px;
`;
const Check = styled.input`
  appearance: none;
  flex: none;
  display: grid;
  place-items: center;
  width: 28px;
  height: 28px;
  border: 2px solid #b5b5b5;
  border-radius: 2px;
  background: #fff;
  opacity: ${(p) => (p.$dim ? 0.7 : 1)};
  &:checked::after {
    content: "";
    width: 18px;
    height: 20px;
    background: #000;
    clip-path: polygon(0 55%, 18% 48%, 38% 75%, 85% 0, 100% 0, 45% 100%, 32% 100%);
  }
`;
const Swatch = styled.span`
  width: 64px;
  height: 63px;
  margin-left: 12px;
  border: 2px solid rgba(80, 80, 80, 0.4);
  background: ${(p) => p.$c};
`;
const ScrollCol = styled.div`
  width: 27px;
  display: flex;
  flex-direction: column;
  justify-content: flex-end;
  border-left: 1px solid #b4b4b4;
  background: #f4f4f4;
`;
const ScrollButton = styled.button`
  display: flex;
  flex: none;
  align-items: center;
  justify-content: center;
  width: ${(p) => (p.$side ? "28px" : "100%")};
  height: ${(p) => (p.$side ? "100%" : "28px")};
  padding: 0;
  border: 0 solid #b4b4b4;
  border-width: ${(p) => p.$b};
  background: linear-gradient(#fff, #f2f2f2);
`;
const Spacer = styled.span`
  flex: none;
  width: ${(p) => p.$w}px;
`;

function TreeItem({ level = 0, arrow, icon, on, children }) {
  return (
    <Row $level={level} $on={on}>
      <Toggle $gap={16} aria-label="Toggle">{arrow && <Tri dir={arrow} />}</Toggle>
      <Icon name={icon} size={32} />
      <RowText $gap={12}>{children}</RowText>
    </Row>
  );
}

const BROWSER = [
  [0, "down", "star", "Favorites"],
  [1, "down", "dir", "/Users/raph/Documents/GIS/"],
  [2, "down", "db", "Session4-London.gpkg"],
  [3, "right", "poly", "BoroughsCensus"],
  [3, "right", "line", "Cycleway-Lines"],
  [3, "right", "poly", "London_Contours"],
  [3, "right", "pts", "Schools"],
  [3, null, "q", "Session4-London-solution"],
  [3, "right", "line", "Tfl_CycleRoutes"],
  [3, "right", "poly", "Ultra_Low_Emissions_Zone"],
  [2, "right", "db", "Session5-London.gpkg"],
  [0, "down", "book", "Spatial Bookmarks"],
  [1, "down", "folder", "Project Bookmarks"],
  [2, null, "pin", "City & Canary Wharf"],
  [2, null, "pinlight", "Greater-London"],
  [1, null, "folder", "User Bookmarks"],
  [0, "right", "projhome", "Project Home"],
  [0, "right", "home", "Home"],
  [0, "right", "folder", "/"],
];
const CLASSES = [["2", "#ffffff"], ["3", "#ffcbcb"], ["4", "#ff9999"], ["5", "#ff6666"], ["6a", "#ff3833"]];

function LayerItem({ arrow, icon, name, on, off, u }) {
  return (
    <Row $level={0} $on={on}>
      <Toggle $gap={15} aria-label="Toggle">{arrow && <Tri dir={arrow} />}</Toggle>
      <Check type="checkbox" defaultChecked aria-label={name} $dim={off} />
      <Spacer $w={12} />
      <Icon name={icon} size={32} />
      <RowText $gap={12} $bold $off={off} $u={u}>{name}</RowText>
    </Row>
  );
}

const SearchBox = styled.label`
  display: flex;
  align-items: center;
  flex: none;
  height: ${(p) => p.$h}px;
  width: ${(p) => p.$w || "auto"};
  padding-left: ${(p) => p.$pl}px;
  gap: 14px;
  border: 2px solid #acacac;
  border-radius: ${(p) => p.$r}px;
  background: ${(p) => p.$bg || "#fff"};
  input { flex: 1; min-width: 0; border: 0; padding: 0; outline: 0; background: none; font-size: 25px; }
  input::placeholder { color: ${(p) => p.$ph}; opacity: 1; font-style: ${(p) => (p.$it ? "italic" : "normal")}; }
`;

/* ---------- map ---------- */

const Canvas = styled.main`
  min-width: 0;
  margin-top: 3px;
  border: 1px solid #b4b4b4;
  background: #fdfdfd;
  overflow: hidden;
  svg { display: block; width: 100%; height: 100%; }
  text { font-family: "Noto Sans", sans-serif; font-size: 20px; font-weight: 600; fill: #d9dee3; }
`;
const DOTS = [
  ["#4059d0", [[2155, 628], [2178, 643], [2200, 637], [2172, 886], [2143, 923], [2162, 923], [2223, 942], [2203, 958], [2154, 996]]],
  ["#4fd0d6", [[2199, 669], [2160, 685], [2176, 698], [2241, 771], [2137, 812], [2162, 912], [2150, 933], [2174, 967]]],
  ["#c9a02c", [[2180, 649], [2240, 707], [2263, 825], [2278, 918], [2157, 929], [2132, 1078]]],
  ["#d0367c", [[2174, 984]]],
];
const PLACES = [
  [2337, 398, "CHELMSFORD"], [2106, 464, "Ongar"], [2236, 547, "Ingatestone"], [2303, 644, "Billericay"],
  [2119, 669, "Brentwood"], [2390, 767, "Basildon"], [2129, 918, "South"], [2112, 942, "Ockendon"],
  [2192, 1000, "Grays"], [2247, 1032, "Tilbury"], [2238, 1080, "Gravesend"], [1802, 1667, "Edenbridge"], [2116, 1671, "Tonbridge"],
];
const BORDER = "M2131 711L2137 730 2158 773 2164 793 2197 788 2200 803 2221 827 2228 845 2177 854 2175 860 2131 868";

const MapView = () => (
  <svg role="img" aria-label="Map canvas">
    <g transform="translate(-789 -285)">
      <g fill="none" stroke="#f5f6f7" strokeWidth="2">
        <path d="M2235 284c30 20 60 20 80 30s10 40 15 50-5 60 0 80 15 50 0 70M2130 290c40 10 40 30 35 60s10 40-35 80" />
        <path d="M2130 450c60-40 140-60 240-60M2375 480c0 60-50 90-90 110s-100 20-150 60M2200 500c0 40-10 80 30 100s50 10 70 20M2130 780c100-20 200-40 280-45M2350 650c0 60 30 80 30 120" />
        <path d="M2260 780c20 40 10 100 30 140M2408 780c-50 60-50 120-110 140s-90 30-120 50M2230 850c10 60-10 120 10 200M2270 1145c-10 60 20 130-10 190s-10 30-40 50" />
        <path d="M2200 1450c20 60 20 120 50 160s60 10 70 50M2300 1500c10-50 80-80 70-110M2408 1515c-60 20-20 80-40 100s-80 20-90 30-50-10-80 5" />
        <path d="M2131 1250c40 30 20 100 50 120s60 30 100 20 90-25 127-5" stroke="#eff1f2" strokeWidth="5" />
        <path d="M2131 1407c60-10 90 5 130-20" stroke="#eff1f2" strokeWidth="5" />
        <path d="M1800 1640c10 20-10 20 10 28M1580 1640v28M1480 1640c10 10 20 20 10 28M1280 1640c-10 10-10 20 0 28" />
      </g>
      <path d="M2197 783h115v18l50 6 20 22 26-16" fill="none" stroke="#f1e6ea" strokeWidth="2" strokeDasharray="4 4" />
      <path d="M2120 1025c20 20 35 10 50-5s30-15 45 5 15 36 50 37 90 0 120-25" fill="none" stroke="#eef1f2" strokeWidth="18" />
      <path d="M2378 1044l4-100 14-20h14v110z" fill="#eef1f2" />
      <path d={BORDER} fill="none" stroke="#f1eff5" strokeWidth="50" strokeLinejoin="round" />
      <path d={BORDER} fill="none" stroke="#e7e4ed" strokeWidth="34" strokeLinejoin="round" />
      <path d={BORDER} fill="#fdfdfd" stroke="#777" strokeWidth="2" />
      {PLACES.map(([x, y, t]) => <text key={t} x={x} y={y}>{t}</text>)}
      {DOTS.map(([c, pts]) => pts.map(([x, y]) => <circle key={`${x}-${y}`} cx={x} cy={y} r="5" fill={c} stroke="#555" strokeWidth="1.5" />))}
    </g>
  </svg>
);

/* ---------- processing toolbox ---------- */

const TOOLBOX = [
  ["clock", "Recently used"], ["q", "Cartography"], ["q", "Database"], ["q", "File tools"], ["q", "Interpolation"],
  ["q", "Layer tools"], ["q", "Mesh"], ["q", "Network analysis"], ["q", "Plots"], ["q", "Raster analysis"],
  ["q", "Raster creation"], ["q", "Raster terrain analysis"], ["q", "Raster tools"], ["q", "Vector analysis"],
  ["q", "Vector creation"], ["q", "Vector general"], ["q", "Vector geometry"], ["q", "Vector overlay"],
  ["q", "Vector selection"], ["q", "Vector table"], ["q", "Vector tiles"], ["gdal", "GDAL"], ["grass", "GRASS"],
  ["quick", "QuickOSM"], ["saga", "SAGA"],
];

/* ---------- status bar ---------- */

const StatusBar = styled.footer`
  display: flex;
  align-items: center;
  flex: none;
  height: 61px;
  padding: 2px 14px 0 8px;
  font-size: 22px;
  color: #1c1c1c;
`;
const StatusLabel = styled.label`
  margin-right: ${(p) => p.$mr}px;
  font-size: 22px;
`;
const Push = styled.span`
  flex: 1;
`;
const Field = styled.div`
  display: flex;
  height: 46px;
  width: ${(p) => p.$w}px;
  margin-right: ${(p) => p.$mr}px;
  border: 2px solid #a6a6a6;
  border-radius: 5px;
  background: rgba(255, 255, 255, 0.55);
  overflow: hidden;
  input { flex: 1; min-width: 0; border: 0; outline: 0; background: none; padding: 0 6px; font-size: 23px; text-align: ${(p) => (p.$c ? "center" : "left")}; }
`;
const Steps = styled.div`
  display: flex;
  flex-direction: column;
  justify-content: center;
  width: ${(p) => p.$w}px;
  border-left: 1px solid #a6a6a6;
  button { display: flex; justify-content: center; padding: 2px 0; border: 0; background: none; }
`;
const Slot = styled.span`
  margin-right: ${(p) => p.$mr}px;
`;

/* ---------- dialog ---------- */

const Dialog = styled.div`
  position: absolute;
  left: 480px;
  top: 120px;
  width: 1650px;
  height: 1517px;
  display: flex;
  flex-direction: column;
  overflow: hidden;
  border-radius: 20px;
  background: #ececec;
`;
const DialogShadow = styled.div`
  position: absolute;
  left: 480px;
  top: 120px;
  width: 1650px;
  height: 1517px;
  border-radius: 20px;
  box-shadow: 0 0 2px 1px rgba(0, 0, 0, 0.3), 0 36px 80px rgba(0, 0, 0, 0.5);
`;
const DialogBody = styled.div`
  flex: 1;
  min-height: 0;
  display: flex;
`;
const Side = styled.div`
  flex: none;
  width: 300px;
  display: flex;
  flex-direction: column;
  background: #5c5c5c;
`;
const SideBody = styled.div`
  flex: 1;
  min-height: 0;
  display: flex;
  margin-top: 12px;
`;
const SideList = styled.nav`
  flex: 1;
  overflow: hidden;
`;
const SideItem = styled.button`
  display: flex;
  align-items: center;
  gap: 16px;
  width: 100%;
  height: ${(p) => (p.$tall ? 80 : 72)}px;
  padding: 0 0 0 ${(p) => (p.$on ? 16 : 10)}px;
  border: 0;
  text-align: left;
  color: ${(p) => (p.$on ? "#000" : "#fff")};
  background: ${(p) => (p.$on ? "#ececec" : "none")};
`;
const SideScroll = styled.div`
  width: 28px;
  display: flex;
  flex-direction: column;
  border-left: 1px solid #b4b4b4;
  background: #e2e2e2;
`;
const Thumb = styled.div`
  flex: 1;
  border-bottom: 2px solid #b4b4b4;
  background: linear-gradient(90deg, #fff, #f0f0f0);
`;
const Groove = styled.div`
  height: 126px;
`;
const Pane = styled.div`
  flex: 1;
  min-width: 0;
  display: flex;
  flex-direction: column;
  padding: 2px 7px 0 8px;
`;
const Heading = styled.h3`
  display: flex;
  align-items: center;
  gap: 16px;
  flex: none;
  height: 44px;
  margin: ${(p) => p.$mt}px 0 0;
  padding-left: 3px;
  font-size: 26px;
  line-height: 32px;
  font-weight: 700;
`;
const Box = styled.div`
  display: flex;
  flex-direction: column;
  flex: ${(p) => (p.$fill ? "1" : "none")};
  min-height: ${(p) => p.$h}px;
  margin-left: 3px;
  padding: 20px 21px 0 19px;
  border: 2px solid #d6d6d6;
  border-radius: 3px;
  background: #e8e8e8;
`;
const Line = styled.div`
  display: flex;
  align-items: center;
  height: 48px;
  margin-bottom: ${(p) => p.$mb || 0}px;
`;
const TextField = styled.input`
  width: ${(p) => p.$w}px;
  height: ${(p) => p.$h}px;
  margin: 0 0 0 ${(p) => p.$ml}px;
  padding: 0 4px;
  border: 2px solid #acacac;
  border-radius: 5px;
  outline: 0;
  font-size: 26px;
  background: #fff;
  &:disabled { color: #555; background: #f0f0f0; }
`;
const SelectWrap = styled.div`
  position: relative;
  display: flex;
  align-items: center;
  flex: ${(p) => (p.$w ? "none" : 1)};
  width: ${(p) => (p.$w ? p.$w + "px" : "auto")};
  margin-left: ${(p) => p.$ml || 0}px;
  opacity: ${(p) => (p.$off ? 0.55 : 1)};
  select {
    appearance: none;
    width: 100%;
    height: 48px;
    padding: 0 ${(p) => (p.$off ? 20 : 40)}px 0 8px;
    border: 2px solid #a8a8a8;
    border-radius: 5px;
    font-size: 26px;
    color: ${(p) => (p.$off ? "#666" : "#111")};
    background: linear-gradient(#fefefe, #ececec);
    opacity: 1;
  }
  svg { position: absolute; right: 13px; pointer-events: none; }
`;
const PushButton = styled.button`
  display: flex;
  align-items: center;
  justify-content: center;
  position: relative;
  width: ${(p) => p.$w}px;
  height: 48px;
  margin-left: ${(p) => p.$ml || 0}px;
  padding: 0 ${(p) => (p.$menu ? 24 : 0)}px 0 0;
  white-space: nowrap;
  border: 2px solid ${(p) => (p.$primary ? "#5a9be8" : "#a8a8a8")};
  border-radius: 5px;
  color: #1a1a1a;
  background: ${(p) => (p.$primary ? "linear-gradient(#fcfdfe, #e3e8f0)" : "linear-gradient(#fefefe, #ececec)")};
  &:disabled { color: #b5b5b5; border-color: #c2c2c2; background: linear-gradient(#fafafa, #eaeaea); }
`;
const ArrowEnd = styled.span`
  position: absolute;
  right: 8px;
`;
const Note = styled.p`
  margin: 0 0 ${(p) => p.$mb}px;
  white-space: nowrap;
  font-size: ${(p) => (p.$bold ? 26 : 25)}px;
  font-weight: ${(p) => (p.$bold ? 700 : 400)};
`;
const Editor = styled.div`
  flex: 1;
  min-height: 0;
  display: flex;
  flex-direction: column;
  border: 2px solid #b8b8b8;
  background: #fff;
  textarea { flex: 1; resize: none; border: 0; outline: 0; background: #fff; }
`;
const HScroll = styled.div`
  display: flex;
  height: 29px;
  border-top: 2px solid #b8b8b8;
  background: #e3e3e3;
`;
const HThumb = styled.div`
  width: 394px;
  border-right: 2px solid #b8b8b8;
  background: linear-gradient(#fff, #f0f0f0);
  margin-right: auto;
`;
const Footer = styled.div`
  display: flex;
  align-items: center;
  flex: none;
  height: 67px;
  padding-top: 6px;
`;
const Right = styled.div`
  display: flex;
  justify-content: flex-end;
  height: 82px;
  padding-top: 13px;
`;

const SECTIONS = [
  ["info", "Information"], ["source", "Source"], ["brush", "Symbology"], ["labels", "Labels"], ["masks", "Masks"],
  ["cube", "3D View"], ["diagrams", "Diagrams"], ["fields", "Fields"], ["form", "Attributes Form"], ["joins", "Joins"],
  ["aux", "Auxiliary Storage"], ["actions", "Actions"], ["display", "Display"], ["broom", "Rendering"],
  ["clockd", "Temporal"], ["variables", "Variables"], ["metadata", "Metadata"], ["deps", "Dependencies"],
  ["legend", "Legend"], ["server", ""],
];

/* highlight frame laid over the screen */
const Mark = styled.div`
  position: absolute;
  left: ${(p) => p.$x}px;
  top: ${(p) => p.$y}px;
  width: ${(p) => p.$w}px;
  height: ${(p) => p.$h}px;
  border: 11px solid #7a1f10;
  border-radius: 28px;
  pointer-events: none;
`;

const Section = ({ first, children }) => (
  <Heading $mt={first ? 0 : 10}><Tri dir="down" size={26} color="#333" />{children}</Heading>
);

function LayerProperties() {
  return (
    <Dialog role="dialog" aria-label="Layer Properties">
      <TitleBar $h={57} $pb={0} $bg="#f0f3f1">
        <Lights><Light $c="#ec6a5e" aria-label="Close" /><Light $c="#d6d8d7" aria-label="Minimise" /><Light $c="#61c354" aria-label="Zoom" /></Lights>
        <h1>Layer Properties — Session4-London BoroughsCensus — Source</h1>
      </TitleBar>
      <DialogBody>
        <Side>
          <SearchBox $h={47} $pl={14} $r={4}><Icon name="search" size={26} /><input aria-label="Search options" /></SearchBox>
          <SideBody>
            <SideList>
              {SECTIONS.map(([icon, name]) => (
                <SideItem key={icon} $on={icon === "source"} $tall={icon === "aux"}>
                  <Icon name={icon} size={48} /><span>{name}</span>
                </SideItem>
              ))}
            </SideList>
            <SideScroll>
              <ScrollButton $b="0 0 2px" aria-label="Scroll up"><Tri dir="up" size={18} /></ScrollButton>
              <Thumb /><Groove />
              <ScrollButton $b="2px 0 0" aria-label="Scroll down"><Tri dir="down" size={18} /></ScrollButton>
            </SideScroll>
          </SideBody>
        </Side>
        <Pane>
          <Section first>Settings</Section>
          <Box $h={152}>
            <Line $mb={11}>
              <label htmlFor="lname">Layer name</label>
              <TextField id="lname" $w={480} $h={48} $ml={14} defaultValue="Public Transport Access Level (PTAL)" />
              <Push />
              <label htmlFor="dname">displayed as</label>
              <TextField id="dname" $w={480} $h={40} $ml={14} disabled defaultValue="Public Transport Access Level (PTAL)" />
            </Line>
            <Line>
              <label htmlFor="enc">Data source encoding</label>
              <SelectWrap $w={138} $ml={18} $off><select id="enc" disabled><option>UTF-8</option></select><Tri dir="down" /></SelectWrap>
            </Line>
          </Box>
          <Section>Assigned Coordinate Reference System (CRS)</Section>
          <Box $h={300}>
            <Line $mb={11}>
              <SelectWrap><select aria-label="Coordinate reference system"><option>EPSG:27700 - OSGB 1936 / British National Grid</option></select><Tri dir="down" /></SelectWrap>
              <PushButton $w={48} $ml={13} aria-label="Select CRS"><Icon name="crs" size={32} /></PushButton>
            </Line>
            <Note $bold $mb={24}>
              Changing this option does not modify the original data source or perform any reprojection of<br />
              features.Rather,it can be used to override the layer's CRS within this project if it could not be<br />
              detected or has been incorrectly detected.
            </Note>
            <Note $mb={0}>The Processing “<em>Reproject Layer</em>” tool should be used to reproject features and permanently change a<br />data source's CRS.</Note>
          </Box>
          <Section>Geometry</Section>
          <Box $h={104}>
            <Line>
              <PushButton $w={252} disabled>Spatial Index Exists</PushButton>
              <PushButton $w={203} $ml={12}>Update Extents</PushButton>
            </Line>
          </Box>
          <Section>Provider Feature Filter</Section>
          <Box $fill $h={300}>
            <Editor>
              <textarea aria-label="Provider feature filter" readOnly />
              <HScroll>
                <ScrollButton $side $b="0 2px 0 0" aria-label="Scroll left"><Tri dir="left" size={18} /></ScrollButton>
                <HThumb />
                <ScrollButton $side $b="0 0 0 2px" aria-label="Scroll right"><Tri dir="right" size={18} /></ScrollButton>
              </HScroll>
            </Editor>
            <Right><PushButton $w={182}>Query Builder</PushButton></Right>
          </Box>
          <Footer>
            <PushButton $w={160}>Help</PushButton>
            <PushButton $w={160} $ml={12} $menu><span>Style</span><ArrowEnd><Tri dir="down" size={14} /></ArrowEnd></PushButton>
            <PushButton $w={160} $ml={12} $primary>Apply</PushButton>
            <Push />
            <PushButton $w={160}>Cancel</PushButton>
            <PushButton $w={160} $ml={12}>OK</PushButton>
          </Footer>
        </Pane>
      </DialogBody>
    </Dialog>
  );
}

export default function App() {
  return (
    <Desktop>
      <GlobalStyle />
      <Window>
        <TitleBar $h={52} $pb={6} $bg="#f0f1f4">
          <Lights>{[1, 2, 3].map((i) => <Light key={i} $c="#d6d7d9" aria-label="Window control" />)}</Lights>
          <h1>*Session4-London-solution — QGIS</h1>
        </TitleBar>
        <Toolbar $h={75}>
          <Tools items={["newdoc", "open", "save", "layout", "manager", "style"]} />
          <Tools on={["hand"]} items={["hand", "pan", "zoomin", "zoomout", "zoomfull", "zoomsel", "zoomlayer", "zoomnative", "zoomlast", "zoomnext", "newmap", "new3d", "newbm", "bms", "clockd", "refresh"]} />
          <Tools on={["gear"]} items={["identify", "table", "abacus", "gear", "sigma", "ruler", "v", "tips", "action", "v", "text", "v"]} />
        </Toolbar>
        <Toolbar $h={78} $pt={2}>
          <Tools items={["datasource", "geopkg", "shp", "spatialite", "memory", "|", "virtual", "|"]} />
          <Group><Handle /><UnderDialog $w={1596} /><ToolButton aria-label="MetaSearch"><Icon name="meta" size={46} /></ToolButton></Group>
          <Tools items={["help"]} />
          <Tools items={[]} />
        </Toolbar>
        <Toolbar $h={76} $pt={4}>
          <Tools items={["select", "v", "selform", "v", "deselect", "v", "selloc"]} />
          <Tools items={["quick", "osm"]} />
        </Toolbar>
        <Body>
          <LeftColumn>
            <Dock $grow={765}>
              <DockTitle><h2>Browser</h2></DockTitle>
              <DockTools>
                {["addlayer", "refresh", "filter", "collapse", "info"].map((n) => <SmallTool key={n} aria-label={n}><Icon name={n} size={30} /></SmallTool>)}
              </DockTools>
              <TreeBox>
                <Tree>
                  {BROWSER.map(([level, arrow, icon, name]) => (
                    <TreeItem key={name} level={level} arrow={arrow} icon={icon} on={name === "Greater-London"}>{name}</TreeItem>
                  ))}
                </Tree>
              </TreeBox>
            </Dock>
            <Splitter />
            <Dock $grow={612}>
              <DockTitle><h2>Layers</h2></DockTitle>
              <DockTools>
                {["brush", "addgroup", "eye", "filter", "eps"].map((n) => <SmallTool key={n} aria-label={n}><Icon name={n} size={32} /></SmallTool>)}
                <SmallTool $w={24} aria-label="Filter options"><Tri dir="down" size={18} /></SmallTool>
                {["expand", "collapse", "remove"].map((n) => <SmallTool key={n} aria-label={n}><Icon name={n} size={32} /></SmallTool>)}
              </DockTools>
              <TreeBox>
                <Tree>
                  <LayerItem arrow="right" icon="line" name="Session4-London Tfl_CycleRoutes" off />
                  <LayerItem arrow="right" icon="pts" name="Session4-London Schools" />
                  <LayerItem icon="green" name="Session4-London Ultra_Low_Emissions" />
                  <LayerItem arrow="down" icon="polyblue" name="Public Transport Access Level (PTAL)" on u />
                  {CLASSES.map(([label, color]) => (
                    <ClassRow key={label}>
                      <Check type="checkbox" defaultChecked aria-label={label} />
                      <Swatch $c={color} />
                      <RowText $gap={12}>{label}</RowText>
                    </ClassRow>
                  ))}
                  <LayerItem icon="lilac" name="London_Contours" />
                </Tree>
                <ScrollCol><ScrollButton $b="2px 0 0" aria-label="Scroll down"><Tri dir="down" size={18} /></ScrollButton></ScrollCol>
              </TreeBox>
            </Dock>
          </LeftColumn>
          <Splitter $v />
          <Canvas><MapView /></Canvas>
          <Splitter $v />
          <Dock $grow={1}>
            <DockTitle>
              <h2>Processing Toolbox</h2>
              <DockButtons>
                <DockButton aria-label="Float"><Svg $size={14} viewBox="0 0 12 12"><path d="M4 1h7v7H4zM1 4h7v7H1z" fill="#e4e4e4" stroke="#555" strokeWidth="1.5" /></Svg></DockButton>
                <DockButton aria-label="Close"><Svg $size={14} viewBox="0 0 12 12"><path d="M2 2l8 8M10 2l-8 8" stroke="#444" strokeWidth="3.2" /></Svg></DockButton>
              </DockButtons>
            </DockTitle>
            <DockTools>
              {["gears", "python", "clock", "results"].map((n) => <SmallTool key={n} aria-label={n}><Icon name={n} size={32} /></SmallTool>)}
              <Sep $h={22} $m={6} /><SmallTool aria-label="Edit in place"><Icon name="editin" size={30} /></SmallTool>
              <Sep $h={22} $m={6} /><SmallTool aria-label="Options"><Icon name="wrench" size={32} /></SmallTool>
            </DockTools>
            <SearchBox $h={48} $pl={14} $r={5} $ph="#b3b3b3" $it><Icon name="search" size={26} /><input placeholder="Search…" aria-label="Search tools" /></SearchBox>
            <TreeBox>
              <Tree>
                {TOOLBOX.map(([icon, name]) => (
                  <Row key={name} $level={0}>
                    <Toggle $gap={14} aria-label="Toggle"><Tri dir="right" /></Toggle>
                    <Icon name={icon} size={32} />
                    <RowText $gap={13}>{name}</RowText>
                  </Row>
                ))}
              </Tree>
            </TreeBox>
          </Dock>
        </Body>
        <StatusBar>
          <SearchBox $h={48} $w="428px" $pl={15} $r={5} $ph="#808080" $bg="#fbfbfb"><Icon name="search" size={26} /><input placeholder="Type to locate (⌘K)" aria-label="Locate" /></SearchBox>
          <Push />
          <StatusLabel $mr={8} htmlFor="coord">Coordinate</StatusLabel>
          <Field $w={202} $mr={8} $c><input id="coord" defaultValue="456603,125946" /></Field>
          <Slot $mr={26}><Icon name="mouse" size={32} /></Slot>
          <StatusLabel $mr={8} htmlFor="scale">Scale</StatusLabel>
          <Field $w={185} $mr={20}><input id="scale" defaultValue="1:543046" /><Steps $w={40}><button aria-label="Scales"><Tri dir="down" /></button></Steps></Field>
          <Slot $mr={14}><Icon name="lock" size={32} /></Slot>
          <StatusLabel $mr={8} htmlFor="mag">Magnifier</StatusLabel>
          <Field $w={181} $mr={20}><input id="mag" defaultValue="100%" /><Steps $w={29}><button aria-label="Increase"><Tri dir="up" size={16} /></button><button aria-label="Decrease"><Tri dir="down" size={16} /></button></Steps></Field>
          <StatusLabel $mr={20} htmlFor="rot">Rotation</StatusLabel>
          <Field $w={185} $mr={12}><input id="rot" defaultValue="0.0 °" /><Steps $w={29}><button aria-label="Increase"><Tri dir="up" size={16} /></button><button aria-label="Decrease"><Tri dir="down" size={16} /></button></Steps></Field>
          <Check type="checkbox" id="render" defaultChecked />
          <Spacer $w={12} />
          <StatusLabel $mr={30} htmlFor="render">Render</StatusLabel>
          <Icon name="globe" size={32} />
          <Spacer $w={4} />
          <span>EPSG:27700</span>
          <Spacer $w={48} />
          <Icon name="bubble" size={32} />
        </StatusBar>
      </Window>
      <Backdrop aria-hidden="true">
        {["3", "4", "4", "4", "4", "4", "8", "4", "8", "6", "7", "4", "4", "4", "7", "2", "5", "2", "3", "4", "5", "7", "3", "("].map((d, i) => <div key={i}>{d}</div>)}
      </Backdrop>
      <DialogShadow />
      <LayerProperties />
      <Mark $x={802} $y={223} $w={664} $h={98} />
      <Mark $x={1114} $y={1544} $w={217} $h={109} />
      <Mark $x={5} $y={1262} $w={582} $h={407} />
    </Desktop>
  );
}
